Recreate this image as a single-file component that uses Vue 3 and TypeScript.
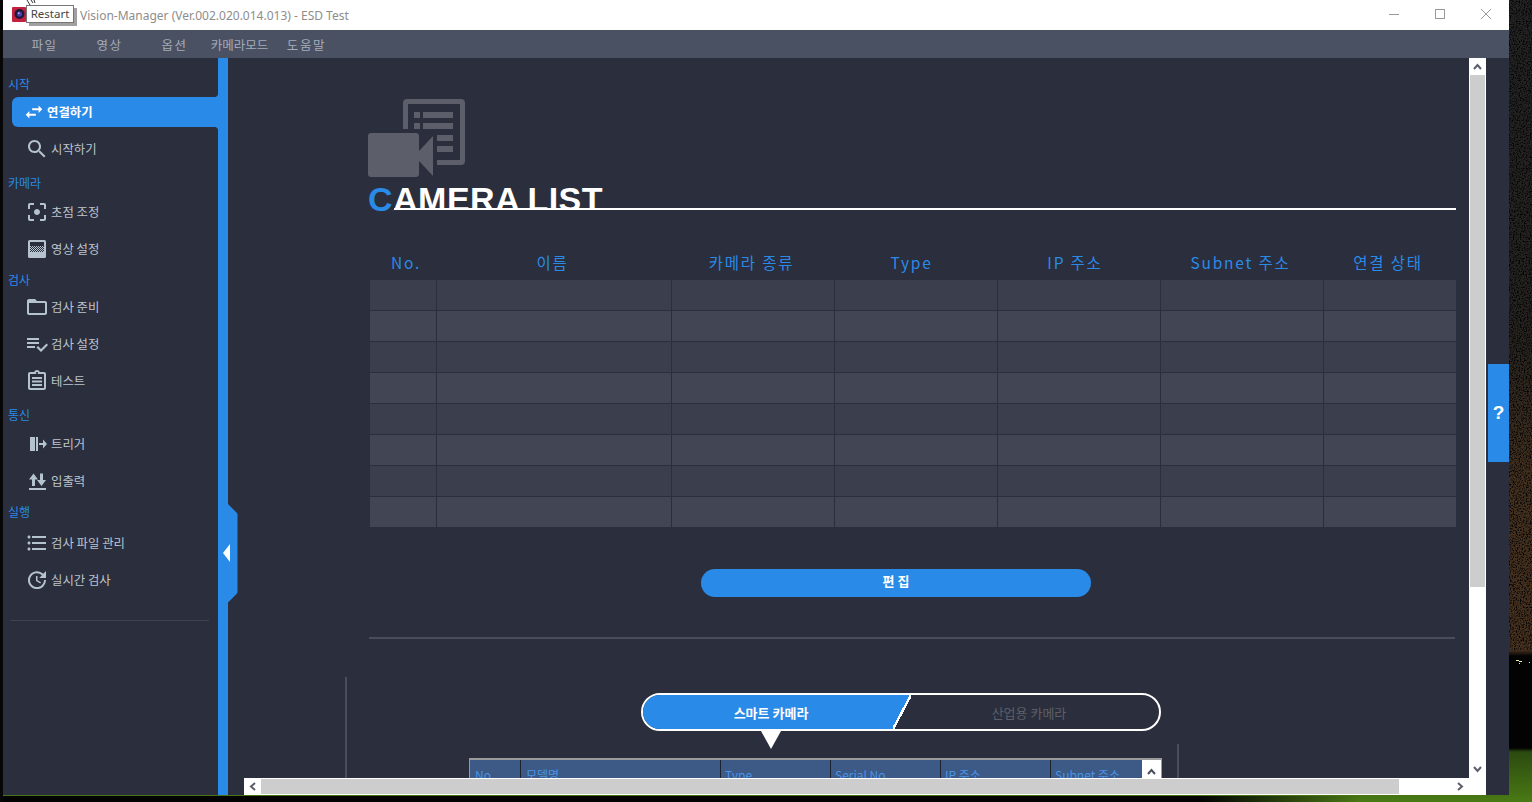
<script setup lang="ts">
interface NavItem { label: string; path?: string; active?: boolean }
interface NavGroup { title: string; height: number; lift: number; items: NavItem[] }

const menus = [
  { label: '파일', cls: 'spaced' },
  { label: '영상', cls: 'spaced' },
  { label: '옵션', cls: 'spaced' },
  { label: '카메라모드', cls: '' },
  { label: '도움말', cls: 'spaced-s' },
]

const groups: NavGroup[] = [
  {
    title: '시작', height: 39, lift: 5,
    items: [
      { label: '연결하기', active: true, path: 'M6.99 11L3 15l3.99 4v-3H14v-2H6.99v-3zM21 9l-3.99-4v3H10v2h7.01v3L21 9z' },
      { label: '시작하기', path: 'M15.5 14h-.79l-.28-.27C15.41 12.59 16 11.11 16 9.5 16 5.91 13.09 3 9.5 3S3 5.91 3 9.5 5.91 16 9.5 16c1.61 0 3.09-.59 4.23-1.57l.27.28v.79l5 4.99L20.49 19l-4.99-5zm-6 0C7.01 14 5 11.99 5 9.5S7.01 5 9.5 5 14 7.01 14 9.5 11.99 14 9.5 14z' },
    ],
  },
  {
    title: '카메라', height: 26, lift: 3,
    items: [
      { label: '초점 조정', path: 'M12 9c-1.66 0-3 1.34-3 3s1.34 3 3 3 3-1.34 3-3-1.34-3-3-3zM5 15H3v4c0 1.1.9 2 2 2h4v-2H5v-4zM5 5h4V3H5c-1.1 0-2 .9-2 2v4h2V5zm14-2h-4v2h4v4h2V5c0-1.1-.9-2-2-2zm0 16h-4v2h4c1.1 0 2-.9 2-2v-4h-2v4z' },
      { label: '영상 설정' },
    ],
  },
  {
    title: '검사', height: 21, lift: 1,
    items: [
      { label: '검사 준비', path: 'M20 6h-8l-2-2H4c-1.1 0-1.99.9-1.99 2L2 18c0 1.1.9 2 2 2h16c1.1 0 2-.9 2-2V8c0-1.1-.9-2-2-2zm0 12H4V8h16v10z' },
      { label: '검사 설정', path: 'M14 10H2v2h12v-2zm0-4H2v2h12V6zM2 16h8v-2H2v2zm19.5-4.5L23 13l-6.99 7-4.51-4.5L13 14l3.01 3 5.49-5.5z' },
      { label: '테스트', path: 'M19 3h-4.18C14.4 1.84 13.3 1 12 1s-2.4.84-2.82 2H5c-1.1 0-2 .9-2 2v14c0 1.1.9 2 2 2h14c1.1 0 2-.9 2-2V5c0-1.1-.9-2-2-2zm-7 0c.55 0 1 .45 1 1s-.45 1-1 1-1-.45-1-1 .45-1 1-1zm7 16H5V5h14v14zM7 8h10v2H7zM7 11.5h10v2H7zM7 15h10v2H7z' },
    ],
  },
  {
    title: '통신', height: 26, lift: 3,
    items: [
      { label: '트리거', path: 'M5 5h5v14H5zM11 5h2v14h-2zM14 11h4V7.5l4 4.5-4 4.5V13h-4z' },
      { label: '입출력', path: 'M8.5 4.5l4.5 6h-3V17H7v-6.5H4zM16.5 17l-4.5-6h3V4.5h3V11h3zM4 19h17v2H4z' },
    ],
  },
  {
    title: '실행', height: 25, lift: 5,
    items: [
      { label: '검사 파일 관리', path: 'M4 10.5c-.83 0-1.5.67-1.5 1.5s.67 1.5 1.5 1.5 1.5-.67 1.5-1.5-.67-1.5-1.5-1.5zm0-6c-.83 0-1.5.67-1.5 1.5S3.17 7.5 4 7.5 5.5 6.83 5.5 6 4.83 4.5 4 4.5zm0 12c-.83 0-1.5.68-1.5 1.5s.68 1.5 1.5 1.5 1.5-.68 1.5-1.5-.67-1.5-1.5-1.5zM7 19h14v-2H7v2zm0-6h14v-2H7v2zm0-8v2h14V5H7z' },
      { label: '실시간 검사', path: 'M21 10.12h-6.78l2.74-2.82c-2.73-2.7-7.15-2.8-9.88-.1-2.73 2.71-2.73 7.08 0 9.79s7.15 2.71 9.88 0C18.32 15.65 19 14.08 19 12.1h2c0 1.98-.88 4.55-2.64 6.29-3.51 3.48-9.21 3.48-12.72 0-3.5-3.47-3.53-9.11-.02-12.58s9.14-3.47 12.65 0L21 3v7.12zM12.5 8v4.25l3.5 2.08-.72 1.21L11 13V8h1.5z' },
    ],
  },
]

const columns = ['No.', '이름', '카메라 종류', 'Type', 'IP 주소', 'Subnet 주소', '연결 상태']
const rows = Array.from({ length: 8 }, (_, i) => i)
const subColumns = ['No', '모델명', 'Type', 'Serial No', 'IP 주소', 'Subnet 주소']
</script>

<template>
  <div class="desktop">
    <!-- wallpaper grain to the right of the window -->
    <svg class="grain" width="23" height="650" viewBox="0 0 23 650">
      <filter id="speckle">
        <feTurbulence type="fractalNoise" baseFrequency="0.7" numOctaves="2" seed="4" />
        <feColorMatrix values="0 0 0 0 0  0 0 0 0 0  0 0 0 0 0  0 0 0 3 -1.3" />
      </filter>
      <rect width="23" height="650" filter="url(#speckle)" />
    </svg>
    <svg class="specks" width="23" height="12" viewBox="0 0 23 12">
      <path d="M7 2h3v1H7zM10 3h3v1h-3zM10 5h1v1h-1zM20 4h1v1h-1z" fill="#f2f2a0" />
    </svg>

    <div class="window">
      <header class="titlebar">
        <svg class="app-icon" viewBox="0 0 14 15">
          <rect width="14" height="15" rx="1" fill="#c4203f" />
          <circle cx="7.5" cy="7" r="5" fill="#1c1a3a" />
          <circle cx="7.5" cy="7" r="2.6" fill="#4a3fb0" />
          <circle cx="6.8" cy="6.2" r="0.9" fill="#b9b4ee" />
        </svg>
        <span class="title-text">Vision-Manager (Ver.002.020.014.013) - ESD Test</span>
        <div class="win-controls">
          <svg width="12" height="12" viewBox="0 0 12 12"><path d="M1 6.5h10" stroke="#999" fill="none" /></svg>
          <svg width="12" height="12" viewBox="0 0 12 12"><rect x="1.5" y="1.5" width="9" height="9" stroke="#999" fill="none" /></svg>
          <svg width="12" height="12" viewBox="0 0 12 12"><path d="M1 1l10 10M11 1L1 11" stroke="#999" fill="none" /></svg>
        </div>
      </header>

      <nav class="menubar">
        <span v-for="m in menus" :key="m.label" class="menu-item" :class="m.cls">{{ m.label }}</span>
      </nav>

      <div class="body">
        <aside class="sidebar">
          <section v-for="g in groups" :key="g.title">
            <div class="group-title" :style="{ height: g.height + 'px', paddingBottom: g.lift + 'px' }">{{ g.title }}</div>
            <div v-for="item in g.items" :key="item.label" class="nav-item" :class="{ active: item.active }">
              <svg v-if="item.path" class="nav-icon" viewBox="0 0 24 24"><path :d="item.path" fill="currentColor" /></svg>
              <svg v-else class="nav-icon" viewBox="0 0 24 24">
                <defs>
                  <pattern id="dots" width="2" height="2" patternUnits="userSpaceOnUse">
                    <rect width="1" height="1" fill="#b4c3cd" />
                    <rect x="1" y="1" width="1" height="1" fill="#b4c3cd" />
                  </pattern>
                </defs>
                <rect x="3" y="3" width="18" height="18" rx="1.5" fill="#b4c3cd" />
                <rect x="5" y="5" width="14" height="10" fill="#2b2e3c" />
                <rect x="5" y="9" width="14" height="6" fill="url(#dots)" />
              </svg>
              <span>{{ item.label }}</span>
            </div>
          </section>
          <div class="side-rule"></div>
        </aside>

        <div class="stripe">
          <div class="handle">
            <svg width="20" height="103" viewBox="0 0 20 103">
              <path d="M10 0v2l8.5 8.5a3 3 0 0 1 1 2V90a3 3 0 0 1-1 2L10 100.5v2.5H0V0z" fill="#2a8ae8" />
              <path d="M5 51l7-9v18z" fill="#fff" />
            </svg>
          </div>
        </div>

        <main class="viewport">
          <div class="page">
            <svg class="hero" width="98" height="78" viewBox="0 0 98 78">
              <g fill="#5c5f69">
                <path d="M35 30V4a4 4 0 0 1 4-4h54a4 4 0 0 1 4 4v58a4 4 0 0 1-4 4H69v-5h23V5H40v25z" />
                <rect x="46" y="13" width="6" height="6" />
                <rect x="55" y="13" width="30" height="6" />
                <rect x="46" y="24" width="6" height="6" />
                <rect x="55" y="24" width="30" height="6" />
                <rect x="69" y="36" width="16" height="6" />
                <rect x="69" y="47" width="16" height="6" />
                <rect x="0" y="34" width="51" height="44" rx="3" />
                <path d="M51 52l14-15v40L51 62z" />
              </g>
            </svg>
            <div class="title-row">
              <h1 class="page-title"><span class="initial">C</span>AMERA LIST</h1>
            </div>

            <div class="table">
              <div class="thead">
                <div v-for="c in columns" :key="c" class="th">{{ c }}</div>
              </div>
              <div v-for="r in rows" :key="r" class="tr" :class="{ odd: r % 2 === 1 }">
                <div v-for="c in columns" :key="c" class="td"></div>
              </div>
            </div>

            <button class="edit-btn" type="button">편 집</button>
            <div class="rule"></div>

            <section class="lower">
              <div class="toggle">
                <div class="seg seg-on">스마트 카메라</div>
                <div class="seg seg-off">산업용 카메라</div>
                <span class="pointer"></span>
              </div>
              <div class="subtable">
                <div class="sub-head">
                  <div v-for="s in subColumns" :key="s" class="sub-th">{{ s }}</div>
                  <div class="sub-scroll">
                    <svg width="9" height="7" viewBox="0 0 9 7"><path d="M1 6l3.5-4L8 6" stroke="#4b4e5a" stroke-width="2" fill="none" /></svg>
                  </div>
                </div>
              </div>
            </section>
          </div>

          <div class="help-tab">?</div>

          <div class="vscroll">
            <svg width="9" height="7" viewBox="0 0 9 7"><path d="M1 6l3.5-4L8 6" stroke="#5c5f6b" stroke-width="2" fill="none" /></svg>
            <div class="vtrack"><div class="vthumb"></div></div>
            <svg class="v-down" width="9" height="7" viewBox="0 0 9 7"><path d="M1 1l3.5 4L8 1" stroke="#5c5f6b" stroke-width="2" fill="none" /></svg>
          </div>
          <div class="hscroll">
            <svg width="7" height="9" viewBox="0 0 7 9"><path d="M6 1L2 4.5 6 8" stroke="#5c5f6b" stroke-width="2" fill="none" /></svg>
            <div class="htrack"><div class="hthumb"></div></div>
            <svg width="7" height="9" viewBox="0 0 7 9"><path d="M1 1l4 3.5L1 8" stroke="#5c5f6b" stroke-width="2" fill="none" /></svg>
          </div>
        </main>
      </div>
    </div>

    <!-- hover tooltip and pointer from the capture -->
    <div class="tooltip">Restart</div>
    <svg class="pointer-cursor" width="10" height="5" viewBox="0 0 10 5"><path d="M1 0l3 5M5 0l2 3M8 0l1 3" stroke="#333" fill="none" /></svg>
  </div>
</template>

<style>
html, body { margin: 0; background: #000; overflow: hidden; }
</style>

<style scoped>
.desktop {
  position: relative;
  width: 1532px;
  height: 802px;
  overflow: hidden;
  font-family: "Noto Sans CJK KR", "Noto Sans", sans-serif;
  background:
    linear-gradient(#070707, #070707) 0 0 / 3px 100% no-repeat,
    linear-gradient(90deg, #030303 0, #030303 1200px, rgba(0, 0, 0, 0) 1360px) 0 796px / 100% 6px no-repeat,
    linear-gradient(180deg, #232325 0, #26231f 340px, #43301f 480px, #46301f 650px, #030303 656px, #030303 748px, #2c4a10 752px, #4a7a14 802px);
}
.grain {
  position: absolute;
  left: 1509px;
  top: 0;
}
.specks {
  position: absolute;
  left: 1509px;
  top: 658px;
}

.window {
  position: absolute;
  left: 3px;
  top: 0;
  width: 1506px;
  height: 795px;
  display: flex;
  flex-direction: column;
  background: #2b2e3c;
}

.titlebar {
  height: 30px;
  flex: none;
  background: #fff;
  display: flex;
  align-items: center;
  padding-left: 9px;
}
.app-icon { width: 14px; height: 15px; margin-top: -1px; }
.title-text {
  margin-left: 54px;
  font-family: "Noto Sans", sans-serif;
  font-size: 12px;
  color: #8d8d8d;
  white-space: nowrap;
}
.win-controls {
  margin-left: auto;
  display: flex;
  gap: 34px;
  padding-right: 17px;
  margin-top: -3px;
}

.menubar {
  height: 28px;
  flex: none;
  background: #4a5163;
  display: flex;
  padding-left: 9px;
  align-items: center;
}
.menu-item {
  width: 65px;
  text-align: center;
  font-size: 12.5px;
  color: #a4abb8;
  white-space: nowrap;
}
.spaced { letter-spacing: 1.5px; }
.spaced-s { letter-spacing: 1.6px; margin-left: 2px; }

.body {
  flex: 1;
  display: flex;
  min-height: 0;
}

.sidebar {
  width: 215px;
  flex: none;
  background: #2b2e3c;
}
.group-title {
  display: flex;
  align-items: flex-end;
  padding-left: 5px;
  box-sizing: border-box;
  font-size: 12px;
  line-height: 16px;
  color: #2a8ae8;
}
.nav-item {
  height: 37px;
  box-sizing: border-box;
  display: flex;
  align-items: center;
  gap: 2px;
  padding-left: 22px;
  font-size: 12.4px;
  color: #bcc4cd;
  white-space: nowrap;
}
.nav-icon { width: 24px; height: 24px; flex: none; color: #b4c3cd; }
.nav-item.active {
  position: relative;
  height: 30px;
  margin: 0 0 3.5px 9px;
  padding: 0 0 1px 11px;
  background: #2a8ae8;
  border-radius: 6px 0 0 6px;
  color: #fff;
  font-weight: 700;
  gap: 2px;
}
.nav-item.active .nav-icon { width: 22px; height: 22px; color: #fff; }
.nav-item.active::before,
.nav-item.active::after {
  content: "";
  position: absolute;
  right: 0;
  width: 4px;
  height: 4px;
}
.nav-item.active::before {
  top: -4px;
  background: radial-gradient(circle at 0 0, #2b2e3c 4px, #2a8ae8 4.5px);
}
.nav-item.active::after {
  bottom: -4px;
  background: radial-gradient(circle at 0 100%, #2b2e3c 4px, #2a8ae8 4.5px);
}
.side-rule {
  height: 1px;
  margin: 21.5px 9px 0 7px;
  background: #3f4350;
}

.stripe {
  position: relative;
  z-index: 1;
  width: 10px;
  flex: none;
  background: #2a8ae8;
}
.handle {
  position: absolute;
  left: 0;
  top: 444px;
  width: 20px;
  height: 103px;
  line-height: 0;
}

.viewport {
  position: relative;
  flex: 1;
  min-width: 0;
  overflow: hidden;
  background: #2b2e3c;
}
.page {
  padding: 41px 0 0 140px;
  width: 1088px;
}
.hero { display: block; }

.title-row {
  height: 34px;
  overflow: hidden;
  position: relative;
}
/* white rule cuts the letter feet; only the blue initial hangs below it */
.title-row::after {
  content: "";
  position: absolute;
  left: 26px;
  right: 0;
  bottom: 0;
  height: 3px;
  background: linear-gradient(#fff 2px, #2b2e3c 2px);
}
.page-title {
  margin: 0;
  font-family: "Liberation Sans", Arial, sans-serif;
  font-size: 34px;
  line-height: 44px;
  font-weight: 700;
  color: #fff;
  letter-spacing: 0.5px;
  word-spacing: -1.5px;
  white-space: nowrap;
}
.initial { color: #2a8ae8; }

.table {
  margin: 38px 0 0 2px;
  width: 1086px;
}
.thead, .tr {
  display: grid;
  grid-template-columns: 67px 235px 163px 163px 163px 163px 132px;
}
.th {
  height: 31px;
  padding-right: 4px;
  box-sizing: border-box;
  text-align: center;
  font-size: 15.5px;
  font-weight: 400;
  line-height: 26px;
  letter-spacing: 1.8px;
  color: #2a8ae8;
  white-space: nowrap;
}
.th:nth-child(1) { padding: 0 0 0 5px; }
.th:nth-child(4) { padding-right: 10px; }
.th:nth-child(5) { padding-right: 9px; }
.tr { height: 31px; background: #3a3e4d; }
.tr.odd { background: #414554; }
.td {
  border-right: 1px solid #2b2e3c;
  border-bottom: 1px solid #2b2e3c;
}
.td:last-child { border-right: 0; }

.edit-btn {
  display: block;
  width: 390px;
  height: 28px;
  margin: 41px 0 0 333px;
  padding: 0 0 5px;
  border: 0;
  border-radius: 14px;
  background: #2a8ae8;
  color: #fff;
  font-family: inherit;
  font-size: 13px;
  font-weight: 700;
}
.rule {
  height: 2px;
  margin: 40px 0 0 1px;
  width: 1086px;
  background: #4a4e5a;
}

.lower {
  position: relative;
  margin: 38px 0 0 -23px;
  width: 834px;
  height: 200px;
  padding-top: 16px;
  box-sizing: border-box;
  border-left: 2px solid #4a4e5a;
}
.lower::after {
  content: "";
  position: absolute;
  right: 0;
  top: 67px;
  bottom: 0;
  width: 2px;
  background: #4a4e5a;
}
.toggle {
  position: relative;
  display: flex;
  width: 520px;
  height: 38px;
  margin-left: 294px;
  box-sizing: border-box;
  border: 2px solid #fff;
  border-radius: 19px;
}
.seg {
  flex: 1;
  display: flex;
  align-items: center;
  justify-content: center;
  font-size: 13px;
}
.seg-on {
  flex: none;
  width: 268px;
  padding-right: 12px;
  box-sizing: border-box;
  color: #fff;
  font-weight: 700;
  background: #2a8ae8;
  border-radius: 17px 0 0 17px;
  clip-path: polygon(0 0, 100% 0, calc(100% - 17px) 100%, 0 100%);
}
.seg-off {
  color: #5c5f69;
  padding-right: 12px;
}
.toggle::after {
  content: "";
  position: absolute;
  left: 250px;
  top: 0;
  width: 18px;
  height: 34px;
  background: linear-gradient(to bottom right, transparent calc(50% - 1.2px), #fff calc(50% - 1.2px), #fff calc(50% + 1.2px), transparent calc(50% + 1.2px));
}
.pointer {
  position: absolute;
  left: 118px;
  top: 36px;
  width: 0;
  height: 0;
  border-left: 10.5px solid transparent;
  border-right: 10.5px solid transparent;
  border-top: 18px solid #fff;
}
.subtable {
  width: 693px;
  margin: 27px 0 0 122px;
  border: 1px solid #9a9a9a;
  border-width: 2px 1px 0;
  box-sizing: border-box;
}
.sub-head {
  display: flex;
  height: 40px;
  background: #3c5a85;
}
.sub-th {
  width: 110px;
  box-sizing: border-box;
  padding: 6px 0 0 4px;
  border-right: 1px solid #1d2230;
  font-size: 12px;
  color: #4a93e6;
  white-space: nowrap;
}
.sub-th:nth-child(1) { width: 51px; padding-left: 5px; }
.sub-th:nth-child(2) { width: 200px; padding-left: 5px; }
.sub-th:nth-child(6) { width: 91px; border-right: 0; }
.sub-scroll {
  width: 19px;
  background: #fff;
  display: flex;
  justify-content: center;
  padding-top: 8px;
  box-sizing: border-box;
}

.help-tab {
  position: absolute;
  left: 1260px;
  top: 306px;
  width: 21px;
  height: 98px;
  background: #2a8ae8;
  color: #fff;
  font-family: "Liberation Sans", Arial, sans-serif;
  font-size: 19px;
  font-weight: 700;
  display: flex;
  align-items: center;
  justify-content: center;
}

.vscroll {
  position: absolute;
  left: 1241px;
  top: 0;
  width: 17px;
  height: 737px;
  background: #fff;
  display: flex;
  flex-direction: column;
  align-items: center;
}
.vscroll > svg { flex: none; margin: 5px 0; }
.vscroll > .v-down { margin: 5px 0 22px; }
.vtrack { flex: 1; width: 100%; }
.vthumb { height: 512px; margin: 0 1px; background: #cdcdcd; }

.hscroll {
  position: absolute;
  left: 16px;
  width: 1225px;
  bottom: 0;
  height: 17px;
  background: #fff;
  display: flex;
  align-items: center;
}
.hscroll > svg { flex: none; margin: 0 5px; }
.htrack { flex: 1; height: 100%; }
.hthumb { width: 1138px; height: 15px; margin-top: 1px; background: #cdcdcd; }

.tooltip {
  position: absolute;
  left: 26px;
  top: 5px;
  width: 48px;
  height: 18px;
  box-sizing: border-box;
  background: #fff;
  border: 1px solid #767676;
  box-shadow: 3px 3px 0 #a0a0a0;
  font-family: "Noto Sans", sans-serif;
  font-size: 11.5px;
  line-height: 15px;
  text-align: center;
  color: #444;
}
.pointer-cursor {
  position: absolute;
  left: 26px;
  top: 0;
}
</style>
